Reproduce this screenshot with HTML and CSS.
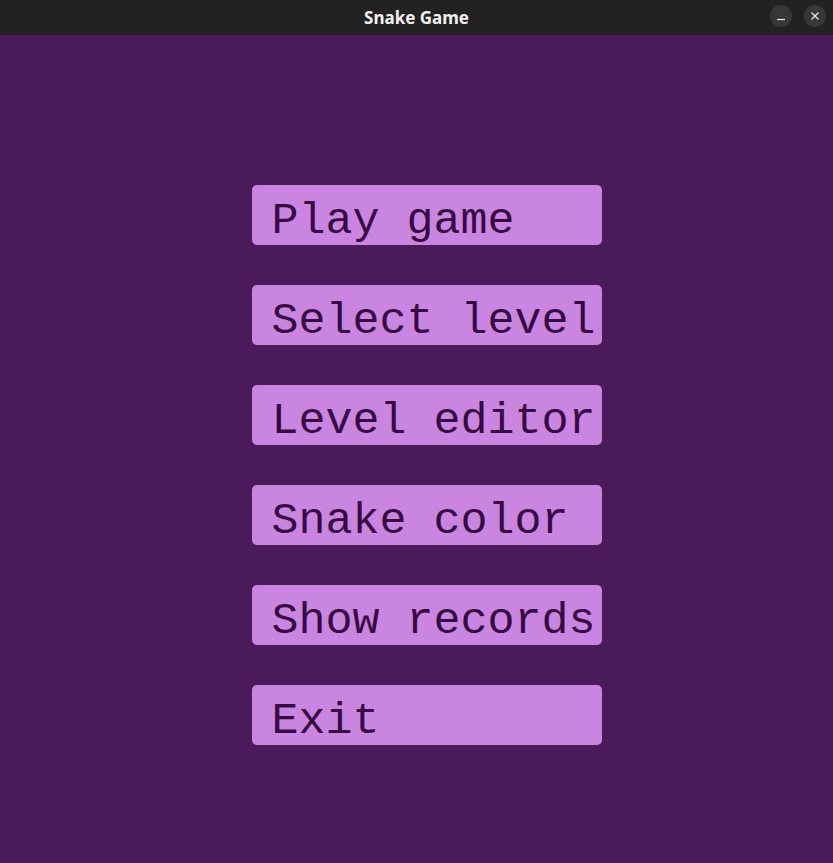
FILE: index.html
```html
<!DOCTYPE html>
<html>
<head>
<meta charset="utf-8">
<link rel="stylesheet" href="styles.css">
</head>
<body>
<div class="window">
  <header class="titlebar">
    <div class="title">Snake Game</div>
    <div class="controls">
      <div class="ctl">
        <svg width="22" height="22" viewBox="0 0 22 22"><line x1="7" y1="14.5" x2="15" y2="14.5" stroke="#e8e8e8" stroke-width="1.2"/></svg>
      </div>
      <div class="ctl">
        <svg width="22" height="22" viewBox="0 0 22 22"><path d="M7.5 7.5 L14.5 14.5 M14.5 7.5 L7.5 14.5" stroke="#e8e8e8" stroke-width="1.3"/></svg>
      </div>
    </div>
  </header>
  <main class="content">
    <nav class="menu">
      <div class="item">Play game</div>
      <div class="item">Select level</div>
      <div class="item">Level editor</div>
      <div class="item">Snake color</div>
      <div class="item">Show records</div>
      <div class="item">Exit</div>
    </nav>
  </main>
</div>
</body>
</html>
```

FILE: styles.css
```css
html, body {
  margin: 0;
  padding: 0;
  width: 833px;
  height: 863px;
  overflow: hidden;
  background: #4a1a5a;
}
.window {
  display: flex;
  flex-direction: column;
  height: 863px;
}
.titlebar {
  position: relative;
  height: 34px;
  background: #222222;
  border-bottom: 1px solid #1a1a1a;
  display: flex;
  align-items: center;
  justify-content: center;
  flex: none;
}
.title {
  font-family: "Noto Sans", sans-serif;
  font-weight: 700;
  font-size: 17px;
  color: #f2f2f2;
  padding-top: 1px;
}
.controls {
  position: absolute;
  right: 7px;
  top: 5px;
  display: flex;
  gap: 12px;
}
.ctl {
  width: 22px;
  height: 22px;
  border-radius: 50%;
  background: #373737;
  display: flex;
}
.content {
  flex: 1;
  background: #4a1a5a;
  display: flex;
  justify-content: center;
  padding-top: 150px;
  padding-left: 20px;
}
.menu {
  display: flex;
  flex-direction: column;
  gap: 40px;
}
.item {
  width: 330px;
  height: 46px;
  padding: 14px 0 0 20px;
  background: #c985e0;
  border-radius: 5px;
  font-family: "Liberation Mono", monospace;
  font-size: 45px;
  line-height: 46px;
  color: #380a44;
  white-space: nowrap;
}
```
